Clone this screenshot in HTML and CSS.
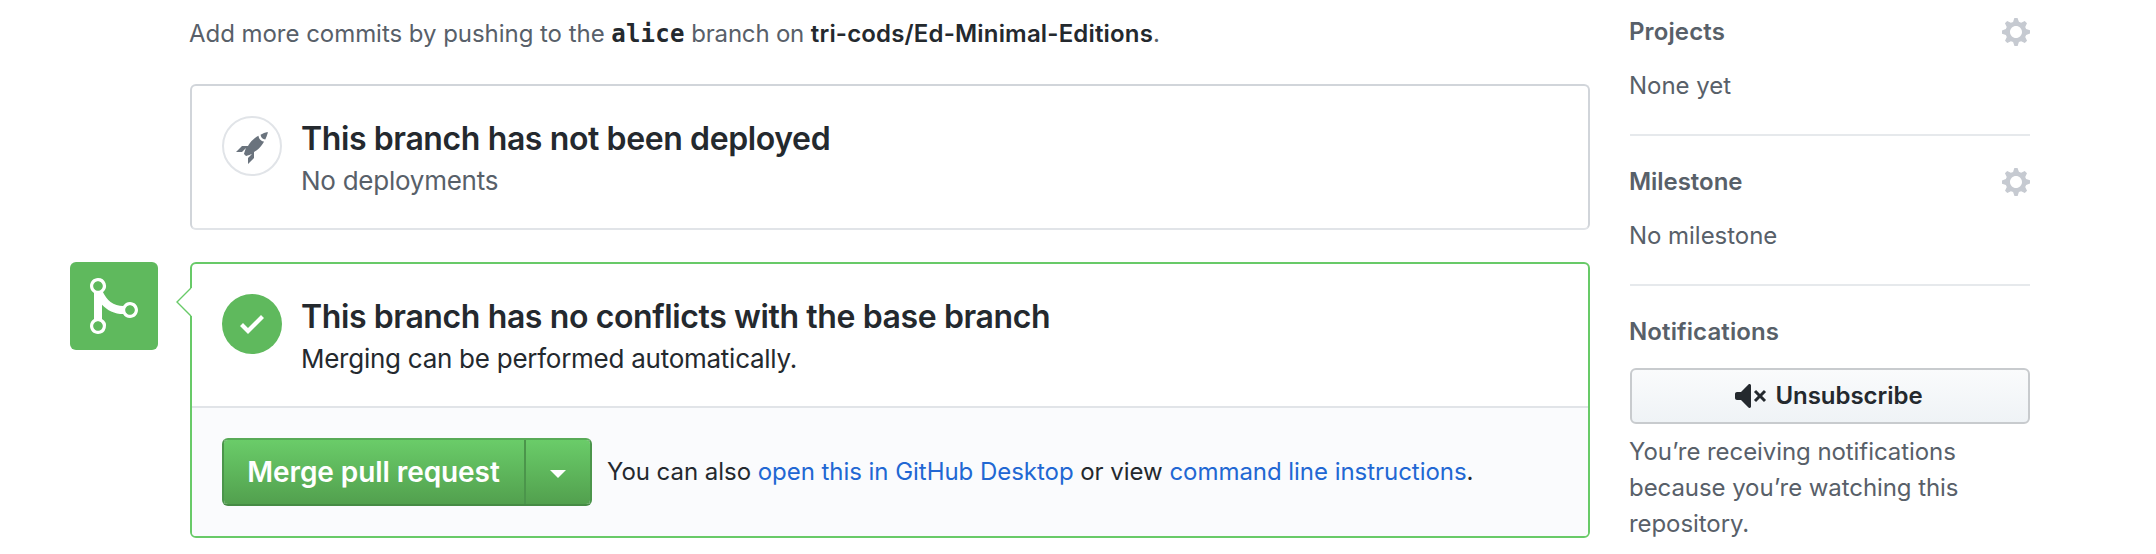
FILE: index.html
```html
<!DOCTYPE html>
<html lang="en">
<head>
<meta charset="utf-8">
<title>Pull request</title>
<link rel="stylesheet" href="styles.css">
</head>
<body>
<div class="page">
  <main class="discussion">
    <p class="push-hint"><span class="hint-text">Add more commits by pushing to the</span> <code class="branch-name">alice</code> <span class="hint-branch">branch on</span> <strong class="repo-name">tri-cods/Ed-Minimal-Editions</strong>.</p>

    <section class="box box-deploy">
      <div class="status">
        <span class="status-icon status-icon-outline">
          <svg class="rocket" viewBox="0 0 16 16"><path d="M12.17 3.83c-.27-.27-.47-.55-.63-.88-.16-.31-.27-.66-.34-1.02-.58.33-1.16.7-1.73 1.13-.58.44-1.14.94-1.69 1.48-.7.7-1.33 1.81-1.78 2.45H3L0 10h3l2-2c-.34.77-1.02 2.98-1 3l1 1c.02.02 2.23-.64 3-1l-2 2v3l3-3v-3c.64-.45 1.75-1.09 2.45-1.78.55-.55 1.05-1.13 1.47-1.7.44-.58.81-1.16 1.14-1.72-.36-.08-.7-.19-1.03-.34a3.39 3.39 0 0 1-.86-.63zM16 0s-.09.38-.3 1.06c-.2.7-.55 1.58-1.06 2.66-.7-.08-1.27-.33-1.66-.72-.39-.39-.63-.94-.7-1.64C13.36.84 14.23.48 14.92.28 15.62.08 16 0 16 0z"/></svg>
        </span>
        <div class="status-body">
          <h3 class="status-title">This branch has not been deployed</h3>
          <p class="status-meta muted">No deployments</p>
        </div>
      </div>
    </section>

    <div class="merge-row">
      <div class="merge-avatar">
        <svg class="merge-icon" viewBox="0 0 12 16"><path d="M10 7c-.73 0-1.38.41-1.73 1.02V8C7.22 7.98 6 7.64 5.14 6.98c-.75-.58-1.5-1.61-1.89-2.44A1.993 1.993 0 0 0 2 .99C.89.99 0 1.89 0 3a2 2 0 0 0 1 1.72v6.56c-.59.35-1 .99-1 1.72 0 1.11.89 2 2 2a1.993 1.993 0 0 0 1-3.72V7.67c.67.7 1.44 1.27 2.3 1.69.86.42 2.03.63 2.97.64v-.02c.36.61 1 1.02 1.73 1.02 1.11 0 2-.89 2-2 0-1.11-.89-2-2-2zm-6.8 6c0 .66-.55 1.2-1.2 1.2-.65 0-1.2-.55-1.2-1.2 0-.65.55-1.2 1.2-1.2.65 0 1.2.55 1.2 1.2zM2 4.2C1.34 4.2.8 3.65.8 3c0-.65.55-1.2 1.2-1.2.65 0 1.2.55 1.2 1.2 0 .65-.55 1.2-1.2 1.2zm8 6c-.66 0-1.2-.55-1.2-1.2 0-.65.55-1.2 1.2-1.2.65 0 1.2.55 1.2 1.2 0 .65-.55 1.2-1.2 1.2z"/></svg>
      </div>
      <section class="box box-merge">
        <svg class="box-caret" viewBox="0 0 16 30"><path d="M16 1v28h-2L1 15 14 1z" fill="#fff"/><path d="M15 1L1 15l14 14" fill="none" stroke="#68ca68" stroke-width="1.4"/></svg>
        <div class="status">
          <span class="status-icon status-icon-success">
            <svg class="check" viewBox="0 0 12 16"><path d="M12 5l-8 8-4-4 1.5-1.5L4 10l6.5-6.5L12 5z"/></svg>
          </span>
          <div class="status-body">
            <h3 class="status-title">This branch has no conflicts with the base branch</h3>
            <p class="status-meta">Merging can be performed automatically.</p>
          </div>
        </div>
        <div class="merge-actions">
          <div class="btn-group">
            <button class="btn-merge" type="button">Merge pull request</button>
            <button class="btn-merge-menu" type="button" aria-label="Select merge method"><span class="caret"></span></button>
          </div>
          <p class="merge-help">You can also <a href="#">open this in GitHub Desktop</a> or view <a href="#">command line instructions</a>.</p>
        </div>
      </section>
    </div>
  </main>

  <aside class="sidebar">
    <section class="side-item">
      <div class="side-head"><h4 class="side-title side-title-wide">Projects</h4>
        <svg class="gear" viewBox="0 0 14 16"><path d="M14 8.77v-1.6l-1.94-.64-.45-1.09.88-1.84-1.13-1.13-1.81.91-1.09-.45-.69-1.92h-1.6l-.63 1.94-1.11.45-1.84-.88-1.13 1.13.91 1.81-.45 1.09L0 7.23v1.59l1.94.64.45 1.09-.88 1.84 1.13 1.13 1.81-.91 1.09.45.69 1.92h1.59l.63-1.94 1.11-.45 1.84.88 1.13-1.13-.92-1.81.47-1.09L14 8.75v.02zM7 11c-1.66 0-3-1.34-3-3s1.34-3 3-3 3 1.34 3 3-1.34 3-3 3z"/></svg>
      </div>
      <p class="side-text">None yet</p>
    </section>
    <section class="side-item">
      <div class="side-head"><h4 class="side-title">Milestone</h4>
        <svg class="gear" viewBox="0 0 14 16"><path d="M14 8.77v-1.6l-1.94-.64-.45-1.09.88-1.84-1.13-1.13-1.81.91-1.09-.45-.69-1.92h-1.6l-.63 1.94-1.11.45-1.84-.88-1.13 1.13.91 1.81-.45 1.09L0 7.23v1.59l1.94.64.45 1.09-.88 1.84 1.13 1.13 1.81-.91 1.09.45.69 1.92h1.59l.63-1.94 1.11-.45 1.84.88 1.13-1.13-.92-1.81.47-1.09L14 8.75v.02zM7 11c-1.66 0-3-1.34-3-3s1.34-3 3-3 3 1.34 3 3-1.34 3-3 3z"/></svg>
      </div>
      <p class="side-text">No milestone</p>
    </section>
    <section class="side-item side-item-last">
      <div class="side-head"><h4 class="side-title side-title-wide">Notifications</h4></div>
      <button class="btn-unsubscribe" type="button">
        <svg class="mute" viewBox="0 0 16 16"><path d="M8 2.81v10.38c0 .67-.81 1-1.28.53L3 10H1c-.55 0-1-.45-1-1V7c0-.55.45-1 1-1h2l3.72-3.72C7.19 1.81 8 2.14 8 2.81zm7.53 3.22l-1.06-1.06-1.97 1.97-1.97-1.97-1.06 1.06L11.44 8 9.47 9.97l1.06 1.06 1.97-1.97 1.97 1.97 1.06-1.06L13.56 8l1.97-1.97z"/></svg>
        <span class="unsubscribe-label">Unsubscribe</span>
      </button>
      <p class="side-note">You’re receiving notifications because you’re watching this repository.</p>
    </section>
  </aside>
</div>
</body>
</html>
```
FILE: styles.css
```css
* { box-sizing: border-box; }

body {
  margin: 0;
  background: #fff;
  color: #24292e;
  font-family: Inter, "Liberation Sans", sans-serif;
  font-size: 24px;
  line-height: 36px;
  letter-spacing: -0.04px;
}

h3, h4, p { margin: 0; font-weight: 400; }
a { color: #2167d3; text-decoration: none; }
button { margin: 0; padding: 0; font: inherit; letter-spacing: inherit; }
svg { display: block; flex: none; }

.page {
  display: flex;
  gap: 40px;
  width: 2030px;
  height: 554px;
  padding-left: 70px;
  overflow: hidden;
}

/* Main column */
.discussion { width: 1520px; padding-top: 16px; }

.push-hint {
  margin: 0 0 32px 119px;
  color: #586069;
  white-space: nowrap;
}
.branch-name {
  color: #24292e;
  font: bold 24px/1 "DejaVu Sans Mono", monospace;
  letter-spacing: 0.2px;
}
.hint-branch { letter-spacing: -0.2px; }
.repo-name { color: #24292e; font-weight: 600; letter-spacing: 0.17px; }

.box {
  border: 2px solid #d1d5da;
  border-radius: 6px;
  background: #fff;
}
.box-deploy {
  height: 146px;
  margin-left: 120px;
  border-bottom-color: #e1e4e8;
}

.status { display: flex; gap: 19px; padding: 30px; }
.status-icon {
  display: flex;
  flex: none;
  align-items: center;
  justify-content: center;
  width: 60px;
  height: 60px;
  border-radius: 50%;
}
.status-icon-outline { border: 2px solid #e1e4e8; padding-top: 4px; }
.status-icon-success { background: #5fb95d; }
.rocket { width: 32px; height: 32px; fill: #6a737d; }
.check { width: 24px; height: 32px; fill: #fff; }

.status-body { margin-top: -1px; }
.status-title {
  font-size: 32px;
  font-weight: 600;
  line-height: 48px;
  letter-spacing: -0.39px;
}
.status-meta { margin-top: -1px; font-size: 26px; line-height: 38px; letter-spacing: -0.26px; }
.muted { color: #586069; }

.merge-row { display: flex; gap: 32px; margin-top: 32px; }
.merge-avatar {
  display: flex;
  flex: none;
  align-items: center;
  justify-content: center;
  width: 88px;
  height: 88px;
  border-radius: 6px;
  background: #5fb95d;
}
.merge-icon { width: 48px; height: 64px; fill: #fff; }

.box-merge { position: relative; width: 1400px; height: 276px; border-color: #68ca68; }
.box-merge .status { height: 142px; }
.box-caret { position: absolute; left: -16px; top: 23px; width: 16px; height: 30px; }

.merge-actions {
  display: flex;
  align-items: flex-start;
  gap: 15px;
  height: 130px;
  padding: 30px;
  border-top: 2px solid #e1e4e8;
  border-radius: 0 0 4px 4px;
  background: #fafbfd;
}
.btn-group {
  display: flex;
  width: 370px;
  height: 68px;
  border: 2px solid;
  border-color: #58aa57 #4b954b #468b45;
  border-radius: 6px;
  background: linear-gradient(#6acc69, #52a04e);
  background-clip: padding-box;
}
.btn-merge, .btn-merge-menu { border: 0; background: none; color: #fff; }
.btn-merge {
  width: 302px;
  padding-right: 1px;
  border-right: 2px solid #4b954b;
  font-size: 28px;
  font-weight: 600;
  letter-spacing: -0.08px;
}
.btn-merge-menu { display: flex; flex: 1; align-items: center; justify-content: center; padding-top: 4px; }
.caret { border: 8px solid transparent; border-top-color: #fff; border-bottom: 0; }
.merge-help { padding-top: 16px; white-space: nowrap; }

/* Sidebar */
.sidebar { width: 400px; padding-top: 13px; color: #586069; }
.side-item { height: 123px; margin-bottom: 27px; border-bottom: 2px solid #e6e9ec; }
.side-item-last { height: auto; margin: 0; border: 0; }
.side-head { display: flex; justify-content: space-between; height: 36px; }
.side-title { margin-left: -1px; padding-top: 1px; font-weight: 600; }
.side-title-wide { letter-spacing: 0.12px; }
.gear { width: 28px; height: 32px; margin-top: 3px; fill: #c6cad1; }
.side-text { margin: 19px 0 0 -1px; }

.btn-unsubscribe {
  display: flex;
  align-items: center;
  justify-content: center;
  gap: 8px;
  width: 400px;
  height: 56px;
  margin-top: 19px;
  padding-right: 2px;
  border: 2px solid #c8cbce;
  border-radius: 6px;
  background: linear-gradient(#fafbfc, #eff3f6);
  color: #24292e;
  font-weight: 600;
}
.unsubscribe-label { padding-bottom: 1px; }
.mute { width: 32px; height: 32px; fill: currentColor; }
.side-note { margin: 10px 0 0 -1px; letter-spacing: -0.07px; }
```
